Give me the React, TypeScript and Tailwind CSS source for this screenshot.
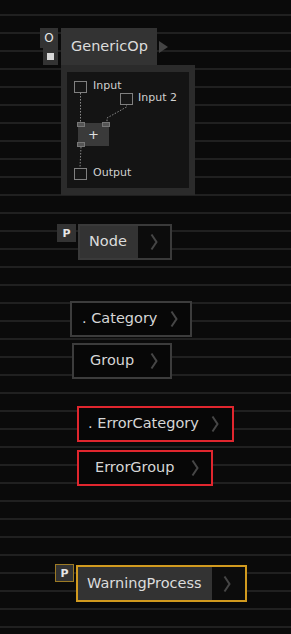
const font = { fontFamily: '"DejaVu Sans", "Liberation Sans", sans-serif' };

const Chevron = ({ className = "" }: { className?: string }) => (
  <svg width="8" height="18" viewBox="0 0 8 18" className={className}>
    <path d="M1.5 1.5 L6.5 9 L1.5 16.5" fill="none" stroke="#464646" strokeWidth="2" />
  </svg>
);

const Checkbox = ({ className }: { className: string }) => (
  <div className={`absolute w-[13px] h-[12px] border-[1.5px] border-[#808080] bg-[#161616] ${className}`} />
);

const GenericOp = () => (
  <div className="flex ml-[40px]">
    {/* side tabs */}
    <div className="flex flex-col items-end w-[18px]">
      <div className="w-[18px] h-[20px] bg-[#333] flex items-center justify-center text-[12px] text-[#e6e6e6] leading-none">
        O
      </div>
      <div className="w-[15px] h-[17px] bg-[#333] flex items-center justify-center">
        <div className="w-[7px] h-[7px] bg-[#d8d8d8]" />
      </div>
    </div>

    <div className="ml-[3px] flex flex-col">
      <div className="flex items-center">
        <div className="w-[96px] h-[37px] bg-[#333] flex items-center pl-[10px] text-[14.5px] text-[#dcdcdc]">
          GenericOp
        </div>
        <svg width="10" height="12" viewBox="0 0 10 12" className="ml-[2px]">
          <path d="M0 0 L9 6 L0 12 Z" fill="#444" />
        </svg>
      </div>
      <div className="w-[134px] h-[130px] bg-[#2b2b2b] px-[6px] pt-[7px] pb-[7px]">
        <div className="relative w-full h-full bg-[#141414] text-[11px] text-[#d0d0d0] leading-[14px]">
          <svg className="absolute inset-0" width="122" height="116">
            <g fill="none" stroke="#8a8a8a" strokeWidth="1" strokeDasharray="1.5 1.5">
              <path d="M13.5 21 L13.5 50" />
              <path d="M59.5 32 L59.5 35 L40 46 L40 50" />
              <path d="M14 75 L13 96" />
            </g>
          </svg>
          <Checkbox className="left-[7px] top-[9px]" />
          <span className="absolute left-[26px] top-[7px]">Input</span>
          <Checkbox className="left-[53px] top-[21px]" />
          <span className="absolute left-[71px] top-[19px]">Input 2</span>
          <div className="absolute left-[11px] top-[51px] w-[31px] h-[23px] bg-[#3a3a3a] flex items-center justify-center text-[#e0e0e0] text-[13px]">
            +
          </div>
          <div className="absolute left-[10px] top-[50px] w-[8px] h-[5px] bg-[#555] border border-[#777]" />
          <div className="absolute left-[35px] top-[50px] w-[8px] h-[5px] bg-[#555] border border-[#777]" />
          <div className="absolute left-[10px] top-[70px] w-[8px] h-[5px] bg-[#555] border border-[#777]" />
          <Checkbox className="left-[7px] top-[96px]" />
          <span className="absolute left-[26px] top-[94px]">Output</span>
        </div>
      </div>
    </div>
  </div>
);

const Tag = ({ warning = false }: { warning?: boolean }) => (
  <div
    className={`w-[19px] h-[18px] bg-[#333] flex items-center justify-center text-[11px] font-bold text-[#e6e6e6] leading-none ${
      warning ? "border border-[#9c7a24]" : ""
    }`}
  >
    P
  </div>
);

const Pill = ({
  label,
  width,
  pl,
  mr,
  border,
}: {
  label: string;
  width: string;
  pl: string;
  mr: string;
  border: string;
}) => (
  <div className={`flex items-center h-[36px] border-2 bg-[#070707] ${width} ${border}`}>
    <span className={`text-[14.5px] text-[#d6d6d6] ${pl}`}>{label}</span>
    <Chevron className={`ml-auto ${mr}`} />
  </div>
);

export default function App() {
  return (
    <div
      className="w-full h-[634px] overflow-hidden pt-[28px] bg-[repeating-linear-gradient(180deg,#0a0a0a_0px,#0a0a0a_14px,#202020_14px,#202020_16px,#0a0a0a_16px,#0a0a0a_18px)]"
      style={font}
    >
      <GenericOp />

      {/* Node */}
      <div className="flex ml-[57px] mt-[29px]">
        <Tag />
        <div className="ml-[2px] flex items-center w-[94px] h-[36px] border-2 border-[#3a3a3a] bg-[#0c0c0c]">
          <div className="w-[58px] h-full bg-[#333] flex items-center pl-[9px] text-[14.5px] text-[#dcdcdc]">
            Node
          </div>
          <Chevron className="ml-auto mr-[12px]" />
        </div>
      </div>

      <div className="ml-[70px] mt-[41px]">
        <Pill label=". Category" width="w-[122px]" pl="pl-[10px]" mr="mr-[12px]" border="border-[#3c3c3c]" />
      </div>
      <div className="ml-[72px] mt-[6px]">
        <Pill label="Group" width="w-[100px]" pl="pl-[16px]" mr="mr-[12px]" border="border-[#3c3c3c]" />
      </div>

      <div className="ml-[77px] mt-[27px]">
        <Pill label=". ErrorCategory" width="w-[157px]" pl="pl-[9px]" mr="mr-[13px]" border="border-[#e0262e]" />
      </div>
      <div className="ml-[77px] mt-[8px]">
        <Pill label="ErrorGroup" width="w-[136px]" pl="pl-[16px]" mr="mr-[12px]" border="border-[#e0262e]" />
      </div>

      {/* Warning */}
      <div className="flex ml-[55px] mt-[78px]">
        <Tag warning />
        <div className="ml-[2px] mt-[1px] flex items-center w-[171px] h-[37px] border-2 border-[#d19a1f] bg-[#0c0c0c]">
          <div className="w-[134px] h-full bg-[#333] flex items-center pl-[9px] text-[14.5px] text-[#dcdcdc]">
            WarningProcess
          </div>
          <Chevron className="ml-auto mr-[14px]" />
        </div>
      </div>
    </div>
  );
}
